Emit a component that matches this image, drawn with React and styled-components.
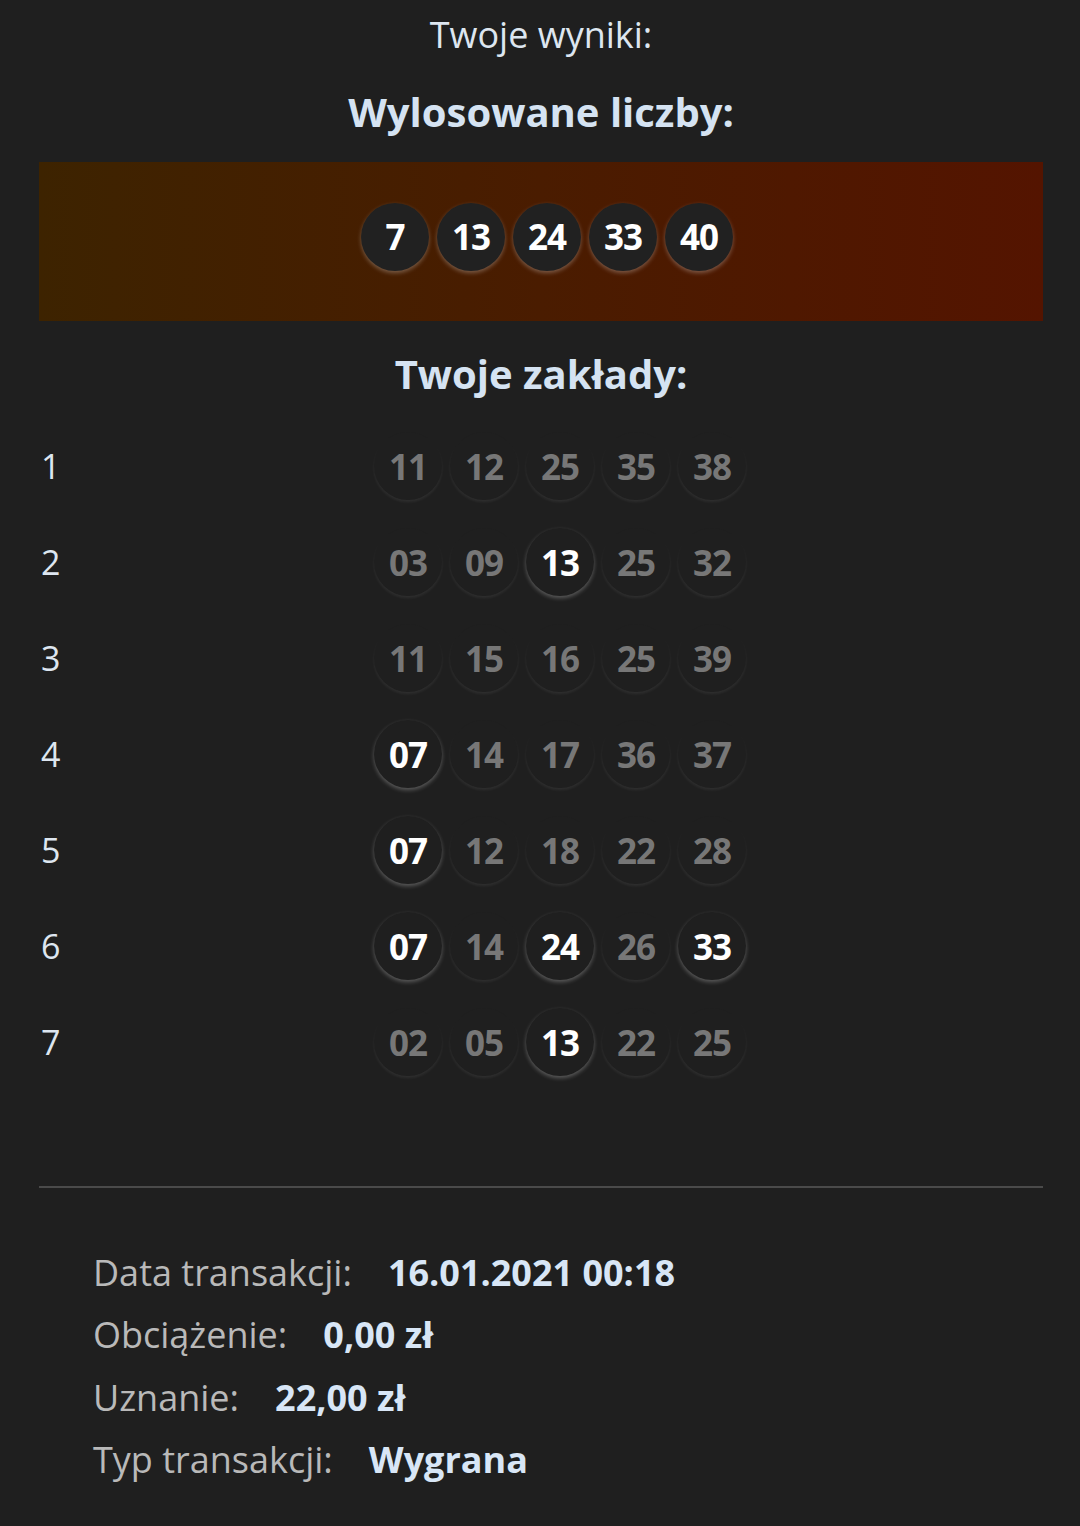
import React from "react";
import styled, { createGlobalStyle } from "styled-components";

const GlobalStyle = createGlobalStyle`
  html, body {
    margin: 0;
    padding: 0;
    background: #1f1f1f;
  }
  body {
    font-family: "Open Sans", "Noto Sans", "Liberation Sans", sans-serif;
    color: #dde6f0;
  }
`;

const Page = styled.div`
  min-height: 1526px;
  padding: 0 37px 0 39px;
  box-sizing: border-box;
  display: flex;
  flex-direction: column;
`;

const Intro = styled.p`
  margin: 12px 0 0;
  text-align: center;
  font-size: 36px;
  line-height: 46px;
  color: #dde6f0;
`;

const Heading = styled.h2`
  margin: ${(p) => p.$top}px 0 0;
  text-align: center;
  font-size: 40px;
  line-height: 50px;
  font-weight: 700;
  color: #d5e3f2;
`;

const Banner = styled.div`
  margin-top: 25px;
  height: 159px;
  box-sizing: border-box;
  padding: 0 0 10px 12px;
  background: linear-gradient(90deg, #3d2300 0%, #4a1c00 50%, #541400 100%);
  display: flex;
  align-items: center;
  justify-content: center;
  gap: 8px;
`;

const Ball = styled.div`
  width: 68px;
  height: 68px;
  border-radius: 50%;
  background: ${(p) => (p.$drawn ? "#212121" : "#1f1f1f")};
  display: flex;
  align-items: center;
  justify-content: center;
  font-size: 35px;
  font-weight: 700;
  letter-spacing: -1px;
  color: ${(p) => (p.$hit ? "#ffffff" : "#777777")};
  box-shadow: ${(p) =>
    p.$hit
      ? "0 2px 4px rgba(255, 255, 255, 0.28)"
      : "0 2px 3px rgba(255, 255, 255, 0.07)"};
`;

const Bets = styled.div`
  margin-top: 19px;
  display: flex;
  flex-direction: column;
`;

const BetRow = styled.div`
  height: 96px;
  display: flex;
  align-items: center;
`;

const BetIndex = styled.span`
  width: 36px;
  padding-left: 2px;
  font-size: 34px;
  color: #dde6f0;
`;

const BetBalls = styled.div`
  flex: 1;
  display: flex;
  justify-content: center;
  gap: 8px;
`;

const Divider = styled.hr`
  margin: 96px 0 0;
  border: 0;
  height: 2px;
  background: #4a4a4a;
`;

const Details = styled.div`
  margin-top: 53px;
  padding-left: 54px;
  display: flex;
  flex-direction: column;
`;

const DetailRow = styled.div`
  height: 62.5px;
  display: flex;
  align-items: center;
  gap: 36px;
  font-size: 36px;
`;

const Label = styled.span`
  color: #b9b9b9;
`;

const Value = styled.span`
  color: #d8e6f6;
  font-weight: 700;
`;

const drawn = [7, 13, 24, 33, 40];

const bets = [
  ["11", "12", "25", "35", "38"],
  ["03", "09", "13", "25", "32"],
  ["11", "15", "16", "25", "39"],
  ["07", "14", "17", "36", "37"],
  ["07", "12", "18", "22", "28"],
  ["07", "14", "24", "26", "33"],
  ["02", "05", "13", "22", "25"],
];

const details = [
  ["Data transakcji:", "16.01.2021 00:18"],
  ["Obciążenie:", "0,00 zł"],
  ["Uznanie:", "22,00 zł"],
  ["Typ transakcji:", "Wygrana"],
];

export default function App() {
  return (
    <>
      <GlobalStyle />
      <Page>
        <Intro>Twoje wyniki:</Intro>
        <Heading $top={29}>Wylosowane liczby:</Heading>
        <Banner>
          {drawn.map((n) => (
            <Ball key={n} $drawn $hit>
              {n}
            </Ball>
          ))}
        </Banner>
        <Heading $top={28}>Twoje zakłady:</Heading>
        <Bets>
          {bets.map((row, i) => (
            <BetRow key={i}>
              <BetIndex>{i + 1}</BetIndex>
              <BetBalls>
                {row.map((n) => (
                  <Ball key={n} $hit={drawn.includes(Number(n))}>
                    {n}
                  </Ball>
                ))}
              </BetBalls>
            </BetRow>
          ))}
        </Bets>
        <Divider />
        <Details>
          {details.map(([label, value]) => (
            <DetailRow key={label}>
              <Label>{label}</Label>
              <Value>{value}</Value>
            </DetailRow>
          ))}
        </Details>
      </Page>
    </>
  );
}
